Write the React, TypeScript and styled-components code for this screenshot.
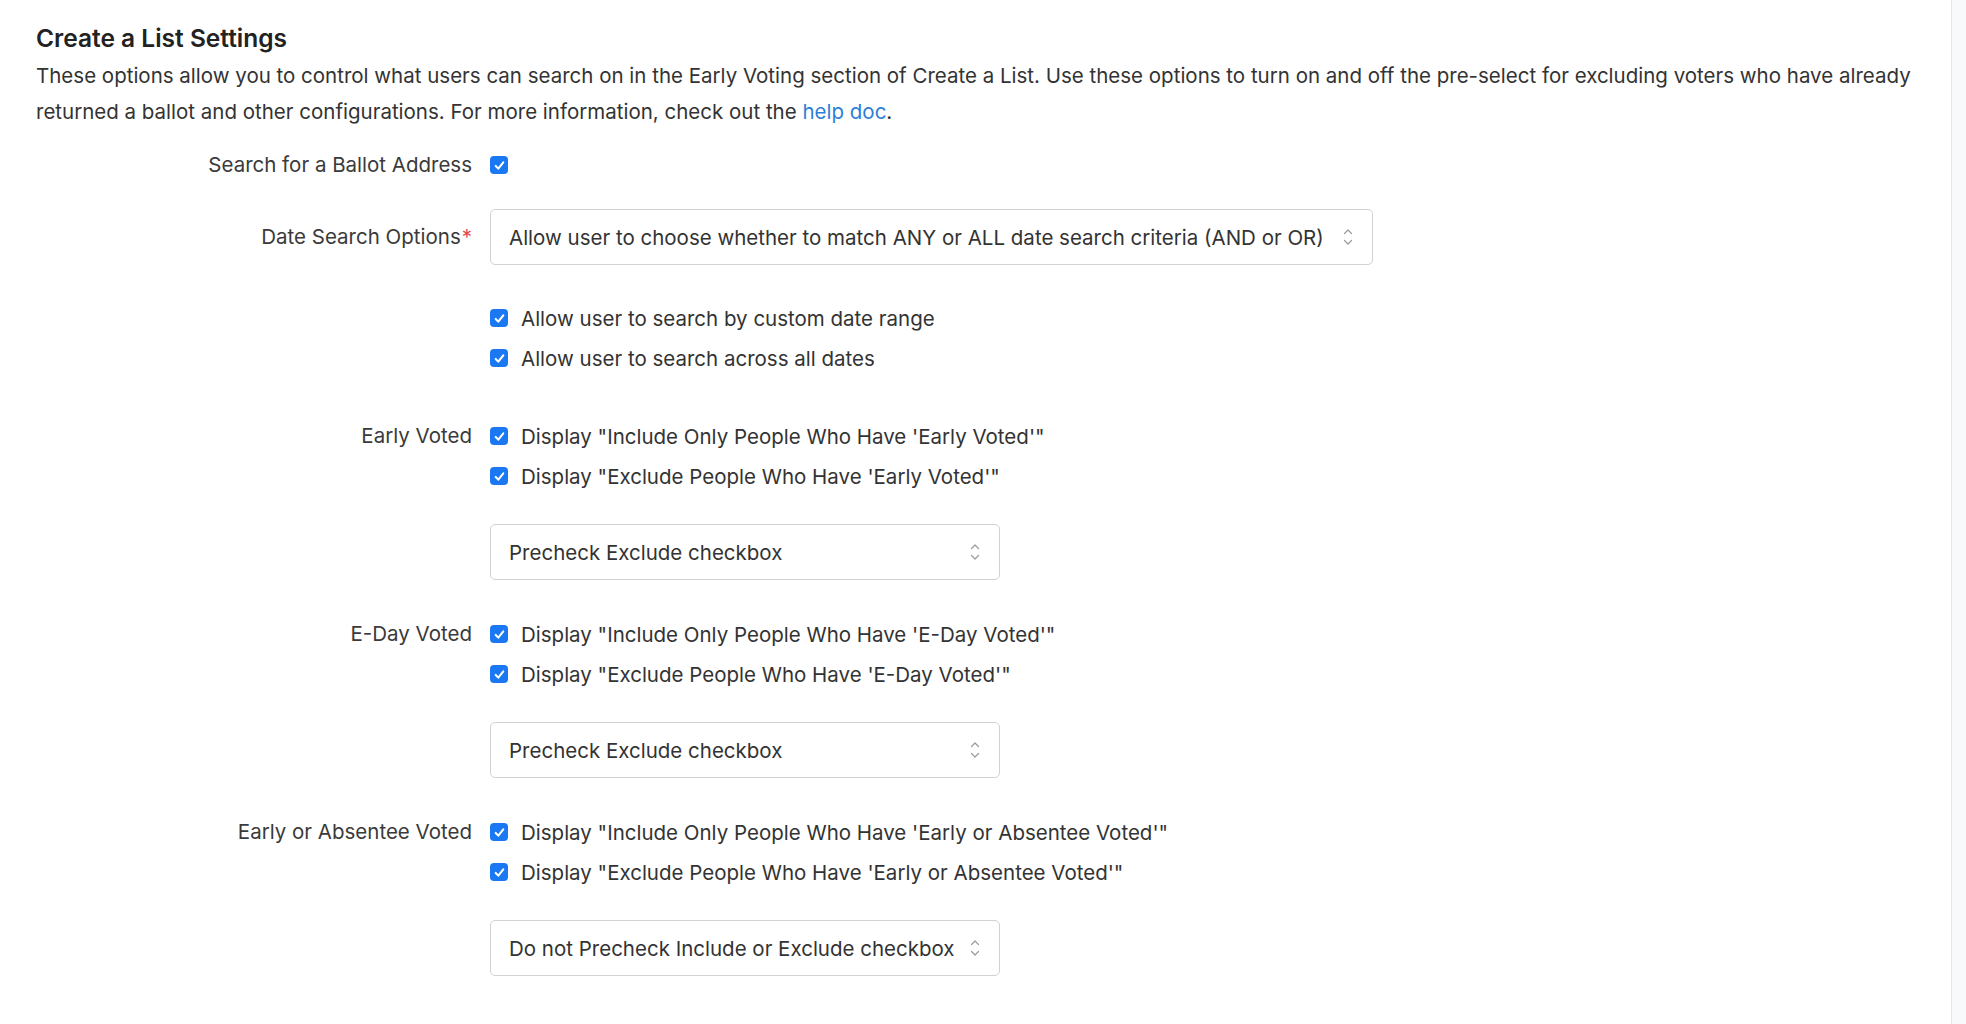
import { styled, createGlobalStyle } from "styled-components"

const GlobalStyle = createGlobalStyle`
  html, body {
    margin: 0;
    padding: 0;
    background: #fff;
    font-family: Inter, "Noto Sans", "Liberation Sans", sans-serif;
    color: #333;
  }
`

const checkGroups = [
  { label: "Early Voted", name: "Early Voted", select: "Precheck Exclude checkbox" },
  { label: "E-Day Voted", name: "E-Day Voted", select: "Precheck Exclude checkbox" },
  { label: "Early or Absentee Voted", name: "Early or Absentee Voted", select: "Do not Precheck Include or Exclude checkbox" },
]

const Checkbox = () => (
  <Box>
    <svg width="13" height="13" viewBox="0 0 12 12" fill="none">
      <path d="M2.5 6.4 L4.9 8.9 L9.5 3.1" stroke="#fff" strokeWidth="1.9" strokeLinecap="round" strokeLinejoin="round" />
    </svg>
  </Box>
)

const Chevrons = () => (
  <svg width="10" height="20" viewBox="0 0 10 20" fill="none">
    <path d="M1.5 6.5 L5 3 L8.5 6.5" stroke="#9a9a9a" strokeWidth="1.2" strokeLinecap="round" strokeLinejoin="round" />
    <path d="M1.5 13.5 L5 17 L8.5 13.5" stroke="#9a9a9a" strokeWidth="1.2" strokeLinecap="round" strokeLinejoin="round" />
  </svg>
)

const Select = ({ value, width }: { value: string; width: number }) => (
  <SelectBox $width={width}>
    <span>{value}</span>
    <Chevrons />
  </SelectBox>
)

const App = () => {
  return (
    <>
      <GlobalStyle />
      <Page>
        <Main>
          <Title>Create a List Settings</Title>
          <Intro>
            These options allow you to control what users can search on in the Early Voting section of Create a List. Use these options to turn on and off the pre-select for excluding voters who have already returned a ballot and other configurations. For more information, check out the <a href="#">help doc</a>.
          </Intro>

          <Form>
            <Row $mt={15}>
              <Label>Search for a Ballot Address</Label>
              <Controls>
                <CheckRow><Checkbox /></CheckRow>
              </Controls>
            </Row>

            <Row $mt={24}>
              <Label $lh={56}>Date Search Options<Req>*</Req></Label>
              <Controls>
                <Select value="Allow user to choose whether to match ANY or ALL date search criteria (AND or OR)" width={883} />
              </Controls>
            </Row>

            <Row $mt={33}>
              <Label />
              <Controls>
                <CheckRow><Checkbox />Allow user to search by custom date range</CheckRow>
                <CheckRow><Checkbox />Allow user to search across all dates</CheckRow>
              </Controls>
            </Row>

            {checkGroups.map((g, i) => (
              <Row key={g.label} $mt={i === 0 ? 38 : 34}>
                <Label>{g.label}</Label>
                <Controls>
                  <CheckRow><Checkbox />Display "Include Only People Who Have '{g.name}'"</CheckRow>
                  <CheckRow><Checkbox />Display "Exclude People Who Have '{g.name}'"</CheckRow>
                  <SelectWrap>
                    <Select value={g.select} width={510} />
                  </SelectWrap>
                </Controls>
              </Row>
            ))}
          </Form>
        </Main>
        <Side />
      </Page>
    </>
  )
}

const Page = styled.div`
  display: flex;
  min-height: 100vh;
`

const Main = styled.main`
  flex: 1;
  padding: 23px 36px 40px 36px;
  min-width: 0;
`

const Side = styled.aside`
  width: 14px;
  background: #f8f9fb;
  border-left: 1px solid #e4e6ea;
`

const Title = styled.h2`
  margin: 0;
  font-size: 24.5px;
  line-height: 30px;
  font-weight: 600;
  color: #222;
`

const Intro = styled.p`
  margin: 5px 0 0 0;
  font-size: 20.5px;
  line-height: 36px;
  color: #333;

  a {
    color: #2d7fd6;
    text-decoration: none;
  }
`

const Form = styled.div`
  display: flex;
  flex-direction: column;
`

const Row = styled.div<{ $mt: number }>`
  display: grid;
  grid-template-columns: 436px 1fr;
  column-gap: 18px;
  margin-top: ${({ $mt }) => $mt}px;
`

const Label = styled.div<{ $lh?: number }>`
  text-align: right;
  font-size: 20.5px;
  line-height: ${({ $lh }) => $lh || 40}px;
  color: #3a3a3a;
`

const Req = styled.span`
  color: #e5484d;
  margin-left: 1px;
`

const Controls = styled.div`
  display: flex;
  flex-direction: column;
`

const CheckRow = styled.div`
  display: flex;
  align-items: center;
  gap: 13px;
  height: 40px;
  font-size: 20.5px;
  color: #333;
`

const Box = styled.span`
  width: 18px;
  height: 18px;
  border-radius: 4px;
  background: #1a78f2;
  display: inline-flex;
  align-items: center;
  justify-content: center;
  flex-shrink: 0;
`

const SelectWrap = styled.div`
  margin-top: 28px;
`

const SelectBox = styled.div<{ $width: number }>`
  box-sizing: border-box;
  width: ${({ $width }) => $width}px;
  height: 56px;
  border: 1px solid #d2d2d2;
  border-radius: 5px;
  padding: 0 19px 0 18px;
  display: flex;
  align-items: center;
  justify-content: space-between;
  font-size: 20.5px;
  color: #333;
  background: #fff;
`

export default App
